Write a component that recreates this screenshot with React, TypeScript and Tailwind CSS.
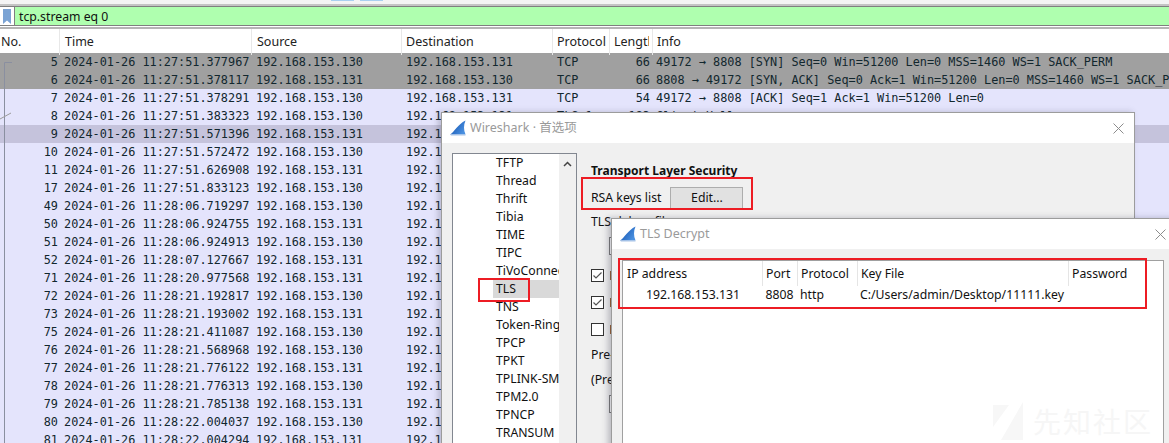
import React from "react";

const ui = "font-['Noto_Sans','Noto_Sans_CJK_SC',sans-serif]";
const rowGrid = "grid grid-cols-[58px_192px_150px_151px_57px_43px_1fr]";

type Row = { no: number; time: string; src: string; proto: string; len: string; info: string; bg: string };

const tcp = "bg-[#e4e4fc]";
const rows: Row[] = [
  { no: 5, time: "11:27:51.377967", src: "130", proto: "TCP", len: "66", info: "49172 → 8808 [SYN] Seq=0 Win=51200 Len=0 MSS=1460 WS=1 SACK_PERM", bg: "bg-[#a0a0a0]" },
  { no: 6, time: "11:27:51.378117", src: "131", proto: "TCP", len: "66", info: "8808 → 49172 [SYN, ACK] Seq=0 Ack=1 Win=51200 Len=0 MSS=1460 WS=1 SACK_PERM", bg: "bg-[#a0a0a0]" },
  { no: 7, time: "11:27:51.378291", src: "130", proto: "TCP", len: "54", info: "49172 → 8808 [ACK] Seq=1 Ack=1 Win=51200 Len=0", bg: tcp },
  { no: 8, time: "11:27:51.383323", src: "130", proto: "TLSv1", len: "183", info: "Client Hello", bg: tcp },
  { no: 9, time: "11:27:51.571396", src: "131", proto: "TCP", len: "60", info: "", bg: "bg-[#c5c3dc]" },
  { no: 10, time: "11:27:51.572472", src: "130", proto: "TCP", len: "54", info: "", bg: tcp },
  { no: 11, time: "11:27:51.626908", src: "131", proto: "TCP", len: "60", info: "", bg: tcp },
  { no: 17, time: "11:27:51.833123", src: "130", proto: "TCP", len: "54", info: "", bg: tcp },
  { no: 49, time: "11:28:06.719297", src: "130", proto: "TCP", len: "54", info: "", bg: tcp },
  { no: 50, time: "11:28:06.924755", src: "131", proto: "TCP", len: "60", info: "", bg: tcp },
  { no: 51, time: "11:28:06.924913", src: "130", proto: "TCP", len: "54", info: "", bg: tcp },
  { no: 52, time: "11:28:07.127667", src: "131", proto: "TCP", len: "60", info: "", bg: tcp },
  { no: 71, time: "11:28:20.977568", src: "131", proto: "TCP", len: "60", info: "", bg: tcp },
  { no: 72, time: "11:28:21.192817", src: "130", proto: "TCP", len: "54", info: "", bg: tcp },
  { no: 73, time: "11:28:21.193002", src: "131", proto: "TCP", len: "60", info: "", bg: tcp },
  { no: 75, time: "11:28:21.411087", src: "130", proto: "TCP", len: "54", info: "", bg: tcp },
  { no: 76, time: "11:28:21.568968", src: "130", proto: "TCP", len: "54", info: "", bg: tcp },
  { no: 77, time: "11:28:21.776122", src: "131", proto: "TCP", len: "60", info: "", bg: tcp },
  { no: 78, time: "11:28:21.776313", src: "130", proto: "TCP", len: "54", info: "", bg: tcp },
  { no: 79, time: "11:28:21.785138", src: "131", proto: "TCP", len: "60", info: "", bg: tcp },
  { no: 80, time: "11:28:22.004037", src: "130", proto: "TCP", len: "54", info: "", bg: tcp },
  { no: 81, time: "11:28:22.004294", src: "131", proto: "TCP", len: "60", info: "", bg: tcp },
];

const protocols = ["TFTP", "Thread", "Thrift", "Tibia", "TIME", "TIPC", "TiVoConnect", "TLS", "TNS", "Token-Ring", "TPCP", "TPKT", "TPLINK-SMARTHOME", "TPM2.0", "TPNCP", "TRANSUM"];

function Fin({ w, h }: { w: number; h: number }) {
  return (
    <svg width={w} height={h} viewBox="0 0 16 16" className="shrink-0">
      <defs>
        <linearGradient id="fin" x1="0" y1="0" x2="1" y2="0.6">
          <stop offset="0" stopColor="#0a49a8" />
          <stop offset="1" stopColor="#4a90e0" />
        </linearGradient>
      </defs>
      <path d="M0 14.5C4 12.5 8 4 15.5 .5C13.5 5 13.5 10 15.5 14.5Z" fill="url(#fin)" />
      <path d="M0 14.5H15.5V15.5H1Z" fill="#a9c4e6" />
    </svg>
  );
}

function CloseX() {
  return (
    <svg width="11" height="11" viewBox="0 0 11 11" className="shrink-0">
      <path d="M.5 .5L10.5 10.5M10.5 .5L.5 10.5" stroke="#8c8c8c" fill="none" />
    </svg>
  );
}

function Check({ on, label }: { on: boolean; label: boolean }) {
  return (
    <div className="flex items-center gap-[6px]">
      <div className="w-[13px] h-[13px] border border-[#333] bg-white flex items-center justify-center">
        {on && (
          <svg width="9" height="9" viewBox="0 0 9 9">
            <path d="M.5 4.5L3 7L8.5 1.5" stroke="#555" strokeWidth="1.2" fill="none" />
          </svg>
        )}
      </div>
      {label && <div className="w-[1px] h-[9px] bg-[#9a6030]" />}
    </div>
  );
}

function PacketList() {
  return (
    <div className="font-['DejaVu_Sans_Mono',monospace] text-[11.85px] text-[#12272e]">
      {rows.map((r) => (
        <div key={r.no} className={`${rowGrid} h-[18px] leading-[18px] whitespace-nowrap ${r.bg}`}>
          <div className="text-right">{r.no}</div>
          <div className="pl-[6px]">2024-01-26 {r.time}</div>
          <div className="pl-[6px]">192.168.153.{r.src}</div>
          <div className="pl-[6px]">192.168.153.{r.src === "130" ? "131" : "130"}</div>
          <div className="pl-[6px]">{r.proto}</div>
          <div className="text-right pr-[1px]">{r.len}</div>
          <div className="pl-[5px] overflow-hidden">{r.info}</div>
        </div>
      ))}
    </div>
  );
}

function PrefsDialog() {
  return (
    <div className={`${ui} absolute left-[441px] top-[112px] w-[694px] h-[340px] border border-[#9c9c9c] bg-[#f0f0f0] shadow-[-3px_0_6px_rgba(60,60,80,0.25)] text-[12.25px] text-[#111]`}>
      <div className="h-[30px] bg-white flex items-center pl-[8px] pr-[10px]">
        <Fin w={16} h={16} />
        <span className="ml-[4px] text-[#9a9a9a] text-[12.5px]">Wireshark · 首选项</span>
        <span className="ml-auto"><CloseX /></span>
      </div>
      <div className="flex pt-[10px] pl-[10px]">
        <div className="w-[125px] h-[300px] border border-[#828790] bg-white flex shrink-0">
          <div className="w-[106px] overflow-hidden">
            {protocols.map((p) => (
              <div key={p} className={`ml-[40px] pl-[3px] h-[18px] leading-[18px] whitespace-nowrap ${p === "TLS" ? "bg-[#d9d9d9]" : ""}`}>
                {p}
              </div>
            ))}
          </div>
          <div className="flex-1 bg-[#f0f0f0] flex justify-center pt-[7px]">
            <svg width="9" height="6" viewBox="0 0 9 6">
              <path d="M1 5L4.5 1.5L8 5" stroke="#444" strokeWidth="1.5" fill="none" />
            </svg>
          </div>
        </div>
        <div className="pl-[14px] flex flex-col">
          <div className="font-bold text-[12px] leading-[18px] mt-[9px]">Transport Layer Security</div>
          <div className="flex items-center mt-[7px] h-[22px]">
            <span>RSA keys list</span>
            <div className="ml-[9px] w-[73px] h-[22px] border border-[#adadad] bg-[#e1e1e1] flex items-center justify-center">Edit...</div>
          </div>
          <div className="mt-[3px] leading-[20px]">TLS debug file</div>
          <div className="ml-[18px] mt-[5px] w-[200px] h-[18px] border border-[#7a7a7a] bg-white" />
          <div className="flex flex-col gap-[14px] mt-[14px]">
            <Check on label />
            <Check on label />
            <Check on={false} label />
          </div>
          <div className="mt-[10px] leading-[18px]">Pre-Shared Key</div>
          <div className="mt-[7px] leading-[18px]">(Pre)-Master-Secret log</div>
          <div className="ml-[18px] mt-[6px] w-[200px] h-[18px] border border-[#7a7a7a] bg-white" />
        </div>
      </div>
    </div>
  );
}

function DecryptDialog() {
  return (
    <div className={`${ui} absolute left-[611px] top-[218px] w-[570px] h-[240px] border border-[#9c9c9c] bg-[#f0f0f0] shadow-[-3px_0_6px_rgba(60,60,80,0.3)] text-[12.25px] text-[#111]`}>
      <div className="h-[30px] bg-white flex items-center pl-[8px]">
        <Fin w={16} h={16} />
        <span className="ml-[4px] text-[#9a9a9a] text-[12.5px]">TLS Decrypt</span>
        <span className="absolute left-[543px] top-[10px]"><CloseX /></span>
      </div>
      <div className="ml-[10px] mt-[11px] w-[542px] h-[190px] border-l border-t border-r border-[#a0a0a0] bg-white relative overflow-hidden">
        <div className="grid grid-cols-[140px_35px_60px_211px_95px] h-[25px] leading-[25px]">
          <div className="pl-[4px] border-r border-[#e5e5e5]">IP address</div>
          <div className="pl-[3px] border-r border-[#e5e5e5]">Port</div>
          <div className="pl-[3px] border-r border-[#e5e5e5]">Protocol</div>
          <div className="pl-[3px] border-r border-[#e5e5e5]">Key File</div>
          <div className="pl-[3px]">Password</div>
        </div>
        <div className="grid grid-cols-[140px_35px_60px_211px_95px] h-[18px] leading-[18px] whitespace-nowrap">
          <div className="text-center">192.168.153.131</div>
          <div className="text-center pr-[2px]">8808</div>
          <div className="pl-[2px]">http</div>
          <div className="pl-[2px]">C:/Users/admin/Desktop/11111.key</div>
          <div />
        </div>
        {/* watermark */}
        <div className="absolute left-[370px] top-[141px] flex items-center gap-[10px] text-[#f6f6f6]">
          <svg width="30" height="38" viewBox="0 0 30 38">
            <path d="M0 3H16L0 25ZM30 0V38L8 38Z" fill="#f7f7f7" />
          </svg>
          <span className="font-['Noto_Sans_CJK_SC',sans-serif] text-[28px] leading-[38px] tracking-[2px]">先知社区</span>
        </div>
      </div>
    </div>
  );
}

export default function App() {
  return (
    <div className="relative w-[1169px] h-[443px] overflow-hidden bg-[#e4e4fc]">
      {/* Top strip */}
      <div className="h-[6px] bg-[#f4f4f4] border-b-2 border-[#c4c4c4] relative">
        <div className="absolute left-[331px] top-0 w-[23px] h-[1px] bg-[#a9d0f0]" />
        <div className="absolute left-[360px] top-0 w-[23px] h-[1px] bg-[#a9d0f0]" />
      </div>

      {/* Filter bar */}
      <div className="h-[20px] flex border-t border-b border-[#7f7f7f] bg-[#afffaf]">
        <div className="w-[15px] bg-white flex items-center justify-center border-r border-[#7f7f7f]">
          <svg width="10" height="15" viewBox="0 0 10 15">
            <path d="M1 0H9V15L5 11.5L1 15Z" fill="#7ba3d4" />
          </svg>
        </div>
        <div className={`${ui} pl-[4px] text-[12.25px] leading-[20px] text-[#111]`}>tcp.stream eq 0</div>
      </div>
      <div className="h-[3px] bg-white border-b-2 border-[#b5b5b5]" />

      {/* Column header */}
      <div className={`${ui} h-[24px] bg-white grid grid-cols-[60px_192px_150px_151px_57px_43px_1fr] text-[12.5px] leading-[26px] text-[#222]`}>
        <div className="pl-[1px] border-r border-[#e8e8e8]">No.</div>
        <div className="pl-[5px] border-r border-[#e8e8e8]">Time</div>
        <div className="pl-[5px] border-r border-[#e8e8e8]">Source</div>
        <div className="pl-[4px] border-r border-[#e8e8e8]">Destination</div>
        <div className="pl-[4px] border-r border-[#e8e8e8]">Protocol</div>
        <div className="pl-[4px] pr-[3px] border-r border-[#e8e8e8]">
          <div className="overflow-hidden whitespace-nowrap">Length</div>
        </div>
        <div className="pl-[4px]">Info</div>
      </div>

      <PacketList />

      {/* Conversation bracket in the No. column */}
      <svg width="14" height="390" viewBox="0 0 14 390" className="absolute left-0 top-[53px]">
        <path d="M12 9.5H4.5V390" stroke="#8a8fa0" fill="none" />
        <path d="M0 66L11 60" stroke="#9a9a9a" fill="none" />
      </svg>

      <PrefsDialog />
      <DecryptDialog />

      {/* Red annotation boxes */}
      <div className="absolute left-[581px] top-[177px] w-[172px] h-[33px] border-[2.5px] border-[#ed1c24]" />
      <div className="absolute left-[478px] top-[278px] w-[52px] h-[24px] border-[2.5px] border-[#ed1c24]" />
      <div className="absolute left-[618px] top-[258px] w-[529px] h-[51px] border-[2.5px] border-[#ed1c24]" />
    </div>
  );
}
